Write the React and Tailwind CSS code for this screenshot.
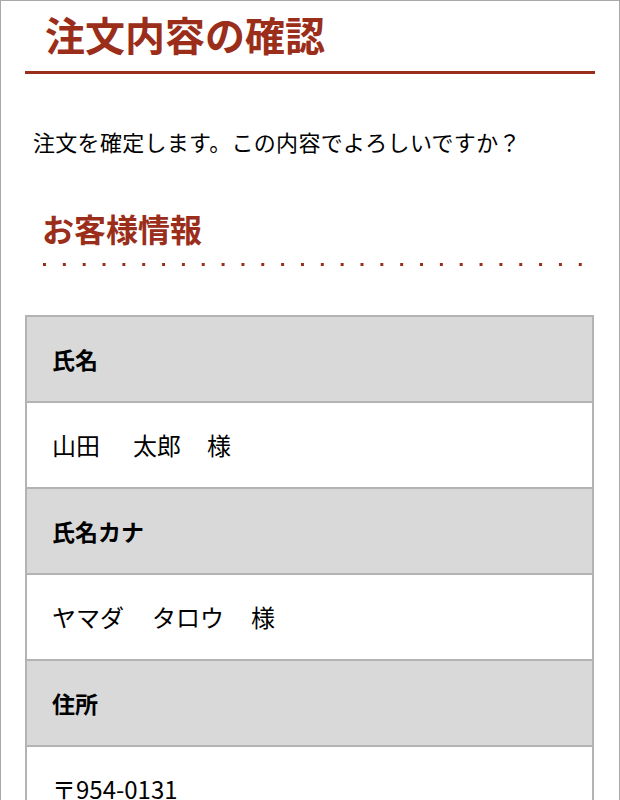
const rows = [
  { label: '氏名', value: <>山田<span className="ml-[33px]">太郎</span><span className="ml-[26px]">様</span></> },
  { label: '氏名カナ', value: <>ヤマダ<span className="ml-[28px]">タロウ</span><span className="ml-[27px]">様</span></> },
  { label: '住所', value: <>〒954-0131<br />新潟県長岡市</> },
  { label: '電話番号', value: '090-1234-5678' },
]

export default function App() {
  return (
    <div
      className="w-[620px] min-h-[800px] border border-b-0 border-[#a9a9a9] bg-white text-black"
      style={{ fontFamily: '"Noto Sans CJK JP", "Noto Sans", sans-serif' }}
    >
      <div className="mx-[24px]">
        {/* Page title */}
        <h1 className="pt-[8px] pl-[20px] pb-[12px] text-[40px] leading-[50px] font-bold text-[#9a2e1b] border-b-[3px] border-[#9a2e1b]">
          注文内容の確認
        </h1>

        <p className="mt-[51px] pl-[8px] text-[22px] leading-[32px] tracking-[0.3px]">
          注文を確定します。この内容でよろしいですか？
        </p>

        {/* Section */}
        <h2 className="mt-[51px] pl-[17px] text-[32px] leading-[40px] font-bold text-[#9a2e1b]">
          お客様情報
        </h2>
        <div className="mt-[15px] ml-[18px] w-[540px] h-[3px] bg-[linear-gradient(90deg,#9a2e1b_3px,transparent_3px)] bg-[length:19.85px_3px] bg-repeat-x" />

        <div className="mt-[49px] mr-[1px] border-2 border-b-0 border-[#b3b3b3]">
          {rows.map((r) => (
            <div key={r.label}>
              <div className="h-[86px] flex items-center px-[25px] bg-[#d9d9d9] border-b-2 border-[#b3b3b3] text-[23px] font-bold">
                {r.label}
              </div>
              <div className="min-h-[86px] flex items-center py-[23px] px-[25px] bg-white border-b-2 border-[#b3b3b3] text-[24px] leading-[38px]">
                <div>{r.value}</div>
              </div>
            </div>
          ))}
        </div>
      </div>
    </div>
  )
}
